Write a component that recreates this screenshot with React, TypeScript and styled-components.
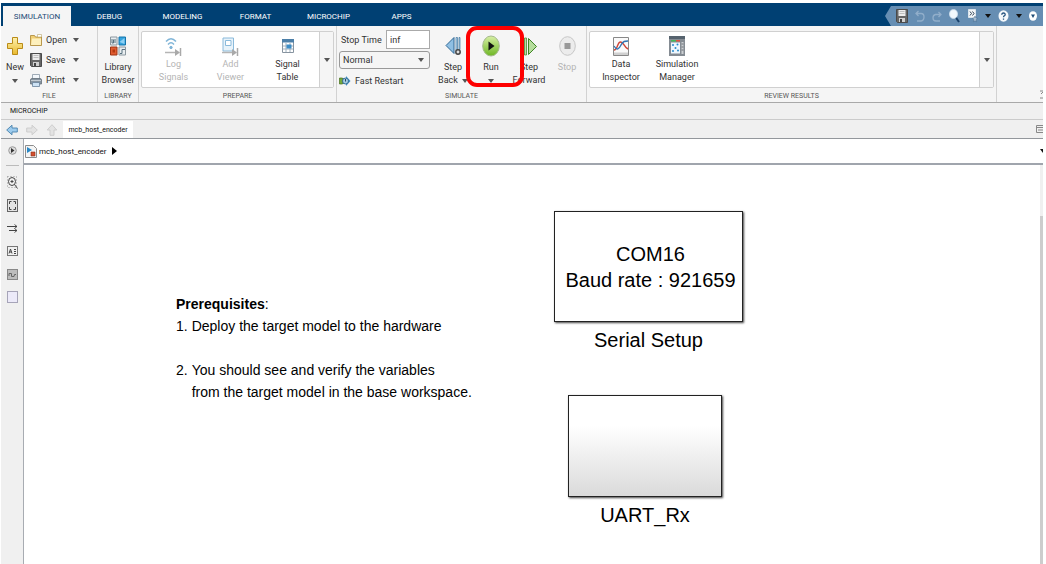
import React from 'react';
import styled, { createGlobalStyle } from 'styled-components';

const GlobalStyle = createGlobalStyle`
  * { box-sizing: border-box; }
  body { margin: 0; background: #fff; font-family: Roboto, "Open Sans", sans-serif; font-size: 9px; color: #333; }
  button, input, select { font: inherit; color: inherit; margin: 0; }
  button { border: 0; padding: 0; background: none; }
  svg { display: block; flex: none; }
`;

const Window = styled.div`
  min-height: 100vh;
  display: flex;
  flex-direction: column;
  padding: 3px 3px 0 1px;
`;

const TabBar = styled.nav`
  display: flex;
  align-items: flex-end;
  height: 23px;
  padding-left: 2px;
  background: #004073;
`;

const Tab = styled.button<{ $active?: boolean }>`
  width: ${p => (p.$active ? 68 : 73)}px;
  height: 20px;
  margin-right: ${p => (p.$active ? 2 : 0)}px;
  font-size: 8px;
  color: ${p => (p.$active ? '#1c4a75' : '#fff')};
  background: ${p => (p.$active ? '#f5f5f5' : 'transparent')};
`;

const QuickAccess = styled.div`
  display: flex;
  align-items: center;
  justify-content: space-between;
  width: 158px;
  height: 20px;
  margin-left: auto;
  padding: 0 6px 0 11px;
  background: #668eb3;
  clip-path: polygon(0 50%, 6px 0, 100% 0, 100% 100%, 6px 100%);
`;

const Toolstrip = styled.div`
  display: flex;
  height: 77px;
  background: #f5f5f5;
  border-bottom: 1px solid #a9a9a9;
`;

const Section = styled.section<{ $width?: number }>`
  display: flex;
  flex-direction: column;
  flex: ${p => (p.$width ? `0 0 ${p.$width}px` : '1')};
  border-right: 1px solid #d2d2d2;
`;

const SectionBody = styled.div<{ $inset?: number }>`
  display: flex;
  height: 65px;
  padding: 4px 0 0 ${p => p.$inset ?? 0}px;
`;

const SectionTitle = styled.h2`
  margin: 0;
  font-size: 7px;
  line-height: 11px;
  font-weight: 400;
  text-align: center;
  color: #555;
`;

const Tool = styled.button<{ $width: number; $tight?: boolean }>`
  position: relative;
  display: flex;
  flex-direction: column;
  align-items: center;
  width: ${p => p.$width}px;
  height: ${p => (p.$tight ? 52 : 58)}px;
  padding-top: ${p => (p.$tight ? 4 : 5)}px;
  line-height: 13px;
  color: #333;
  &:disabled { color: #b4b4b4; }
`;

const ToolIcon = styled.span<{ $tight?: boolean }>`
  display: flex;
  align-items: center;
  justify-content: center;
  height: ${p => (p.$tight ? 20 : 22)}px;
  margin-bottom: ${p => (p.$tight ? 2 : 4)}px;
`;

const ToolLine = styled.span`
  display: flex;
  align-items: center;
  justify-content: center;
  gap: 4px;
  height: 13px;
  white-space: nowrap;
`;

const SmallTools = styled.div`
  display: flex;
  flex-direction: column;
  margin-left: 4px;
`;

const SmallTool = styled.button`
  display: flex;
  align-items: center;
  width: 49px;
  height: 20px;
  gap: 4px;
`;

const SmallLabel = styled.span`
  flex: 1;
  text-align: left;
  white-space: nowrap;
`;

const Gallery = styled.div`
  display: flex;
  flex: 1;
  height: 57px;
  margin: 1px 2px 0 2px;
  padding-left: 3px;
  background: #fff;
  border: 1px solid #d0d0d0;
  border-radius: 2px;
`;

const GalleryMore = styled.button`
  display: flex;
  align-items: center;
  justify-content: center;
  width: 14px;
  margin-left: auto;
  background: #f5f5f5;
  border-left: 1px solid #d0d0d0;
`;

const SimFields = styled.div`
  display: flex;
  flex-direction: column;
  gap: 2px;
  width: 91px;
  margin-right: 4px;
`;

const Field = styled.label`
  display: flex;
  align-items: center;
  justify-content: space-between;
  height: 19px;
  padding-left: 2px;
  white-space: nowrap;
`;

const TextInput = styled.input`
  width: 44px;
  height: 19px;
  padding: 0 3px;
  border: 1px solid #aaa;
  background: #fff;
`;

const SelectWrap = styled.div`
  position: relative;
  height: 18px;
`;

const ModeSelect = styled.select`
  appearance: none;
  display: block;
  width: 100%;
  height: 18px;
  padding: 0 3px;
  background: #f5f5f5;
  border: 1px solid #999;
  border-radius: 3px;
`;

const SelectArrow = styled.span`
  position: absolute;
  right: 6px;
  top: 7px;
  pointer-events: none;
`;

const Highlight = styled.span`
  position: absolute;
  left: -6px;
  top: -4px;
  width: 58px;
  height: 61px;
  border: 4px solid #fe0000;
  border-radius: 11px;
  pointer-events: none;
  z-index: 1;
`;

const StripEnd = styled.div`
  display: flex;
  align-items: flex-end;
  justify-content: flex-end;
  flex: 0 0 46px;
  padding-bottom: 3px;
`;

const AppRow = styled.div`
  height: 17px;
  padding-left: 9px;
  font-size: 7px;
  line-height: 17px;
  color: #111;
  background: #f0f0f0;
  border-bottom: 1px solid #cbcbcb;
`;

const NavRow = styled.div`
  display: flex;
  align-items: center;
  height: 19px;
  padding-left: 5px;
  gap: 8px;
  background: #f0f0f0;
  border-bottom: 1px solid #93979c;
`;

const NavButton = styled.button`
  padding-top: 2px;
`;

const ModelTab = styled.button`
  align-self: flex-end;
  width: 70px;
  height: 17px;
  margin-left: -3px;
  font-size: 7px;
  color: #111;
  background: #fff;
`;

const PushRight = styled.span`
  margin-left: auto;
`;

const Workspace = styled.div`
  display: flex;
  flex: 1;
`;

const Palette = styled.aside`
  display: flex;
  flex-direction: column;
  align-items: center;
  flex: 0 0 23px;
  background: #f0f0f0;
  border-right: 1px solid #a8acb2;
`;

const PaletteButton = styled.button`
  display: flex;
  align-items: center;
  justify-content: center;
  width: 22px;
  height: 23px;
`;

const PaletteRule = styled.hr`
  width: 13px;
  margin: 3px 0 5px;
  border: 0;
  border-top: 1px solid #bbb;
`;

const Editor = styled.main`
  display: flex;
  flex-direction: column;
  flex: 1;
`;

const Breadcrumb = styled.div`
  display: flex;
  align-items: center;
  height: 26px;
  padding-left: 1px;
  gap: 2px;
  border-bottom: 2px solid #a0a5ad;
`;

const CrumbLink = styled.a`
  margin-right: 3px;
  font-size: 8px;
  color: #111;
  text-decoration: none;
`;

const CanvasArea = styled.div`
  display: flex;
  flex: 1;
`;

const Canvas = styled.div`
  position: relative;
  flex: 1;
  min-height: 380px;
  font-family: "Liberation Sans", Arial, sans-serif;
  color: #000;
  background: #fff;
`;

const ScrollBar = styled.div`
  flex: 0 0 3px;
  padding-top: 51px;
  background: #f0f0f0;
`;

const ScrollThumb = styled.div`
  height: 100%;
  background: #cdcdcd;
`;

const Annotation = styled.div`
  position: absolute;
  left: 152px;
  top: 128px;
  font-size: 14px;
  line-height: 22px;
  white-space: nowrap;
  p { margin: 0; }
`;

const Step = styled.p<{ $gap?: boolean }>`
  && { margin-top: ${p => (p.$gap ? 22 : 0)}px; }
  display: flex;
  gap: 4px;
`;

const Node = styled.div<{ $x: number; $y: number; $width: number }>`
  position: absolute;
  left: ${p => p.$x}px;
  top: ${p => p.$y}px;
  width: ${p => p.$width}px;
  font-size: 20px;
  line-height: 26px;
  text-align: center;
  white-space: nowrap;
`;

const NodeBox = styled.div<{ $height: number; $shaded?: boolean }>`
  display: flex;
  flex-direction: column;
  justify-content: center;
  height: ${p => p.$height}px;
  margin-bottom: 5px;
  padding-left: 4px;
  border: 1px solid #222;
  background: ${p => (p.$shaded ? 'linear-gradient(#fff 30%, #dadada)' : '#fff')};
  box-shadow: 1px 1px 2px #444;
`;

const Caret = ({ size = 6, color = '#555' }: { size?: number; color?: string }) => (
  <svg width={size} height={size / 2 + 1} viewBox="0 0 6 4"><path d="M0 0h6L3 4z" fill={color} /></svg>
);

const PlusIcon = () => (
  <svg width="18" height="20" viewBox="0 0 18 20">
    <defs><linearGradient id="gold" x2="0" y2="1"><stop stopColor="#fff3b0" /><stop offset="1" stopColor="#e9b92d" /></linearGradient></defs>
    <path d="M6.500 1.500h5v6h5v5h-5v6h-5v-6h-5v-5h5z" fill="url(#gold)" stroke="#b98b18" strokeLinejoin="round" />
  </svg>
);

const FolderIcon = () => (
  <svg width="12" height="12" viewBox="0 0 12 12">
    <path d="M.5 1.500h4l1 1.500h6v8.500H.5z" fill="#f0cf74" stroke="#a98534" strokeWidth=".8" />
    <path d="M2 4.500h9v6.500H1z" fill="#fdf0bd" />
    <path d="M7.500.5h4v2.500h-4z" fill="#fff" stroke="#b9a56a" strokeWidth=".6" />
  </svg>
);

const DiskIcon = () => (
  <svg width="12" height="14" viewBox="0 0 12 14">
    <path d="M.5.5h11v13h-10l-1-1z" fill="#666" stroke="#4a4a4a" />
    <path d="M2.500 1h7v6h-7z" fill="#ececec" />
    <path d="M3.500 2.500h5M3.500 4.500h5" stroke="#aaa" strokeWidth=".7" />
    <path d="M3 9h6v4H3z" fill="#cfcfcf" /><path d="M4 10h2v3H4z" fill="#444" />
  </svg>
);

const PrinterIcon = () => (
  <svg width="12" height="13" viewBox="0 0 12 13">
    <path d="M2.500.5h7V5h-7z" fill="#f4f8fc" stroke="#8a98a6" strokeWidth=".8" />
    <path d="M.5 6q0-1.500 1.500-1.500h8q1.500 0 1.500 1.500v4H.5z" fill="#8794a0" stroke="#66717b" strokeWidth=".8" />
    <path d="M1 6.500h10" stroke="#c4ccd3" />
    <path d="M2.500 8.500h7v4h-7z" fill="#cde2f4" stroke="#68829b" strokeWidth=".8" />
  </svg>
);

const LibraryIcon = () => (
  <svg width="16" height="20" viewBox="0 0 16 20">
    <path d="M.5 1h6.500v8H.5z" fill="#e8edf0" stroke="#8b979f" />
    <path d="M2 3v4h1.500V3.500M5 7V3" fill="none" stroke="#56707f" />
    <path d="M9 1h6.500v8H9z" fill="#35a4df" stroke="#1474ab" /><path d="M9.500 6l5-4v6z" fill="#8ed0f3" />
    <path d="M.5 11h6.500v8H.5z" fill="#e05b30" stroke="#9e3514" /><path d="M2.500 13.500h2.500v3H2.500z" fill="#b3380f" />
    <path d="M9 11h6.500v8H9z" fill="#e8edf0" stroke="#8b979f" />
    <path d="M10 17.500h2v-4h3" fill="none" stroke="#56707f" />
  </svg>
);

const LogIcon = () => (
  <svg width="17" height="19" viewBox="0 0 17 19" fill="none" stroke="#80b5d8">
    <path d="M1 4.500q5-5.500 10 0" strokeWidth="1.500" /><path d="M3 7.500q3-3.500 6 0" strokeWidth="1.500" />
    <circle cx="6" cy="10.500" r="1.200" fill="#80b5d8" />
    <path d="M0 15.500h12" stroke="#b5b5b5" strokeWidth="1.500" /><path d="M10 12l5 3.500-5 3.500z" fill="#a9a9a9" stroke="none" />
    <path d="M15.500 11v8" stroke="#a9a9a9" strokeWidth="1.500" />
  </svg>
);

const ViewerIcon = () => (
  <svg width="17" height="19" viewBox="0 0 17 19" fill="none">
    <path d="M1 1h10.500v13H1z" fill="#e8f3fa" stroke="#8abadb" /><path d="M3.500 3.500h5.500v5H3.500z" fill="#fff" stroke="#8abadb" />
    <path d="M0 15.500h12" stroke="#b5b5b5" strokeWidth="1.500" /><path d="M10 12l5 3.500-5 3.500z" fill="#a9a9a9" />
    <path d="M15.500 11v8" stroke="#a9a9a9" strokeWidth="1.500" />
  </svg>
);

const TableIcon = () => (
  <svg width="12" height="14" viewBox="0 0 12 14">
    <path d="M.5.5h11v13H.5z" fill="#fff" stroke="#8794a0" /><path d="M0 0h12v3.500H0z" fill="#4c7fa8" />
    <path d="M1 7h10M1 10h10M4 4v9M8 4v9" stroke="#9fb0be" /><path d="M4.500 5.500h5v4h-5z" fill="#3c8dc7" />
  </svg>
);

const FastIcon = () => (
  <svg width="12" height="12" viewBox="0 0 12 12">
    <path d="M.5 3v6h3V3z" fill="#74aa3b" stroke="#456f1c" strokeWidth=".7" /><path d="M7 1l4.500 5L7 11z" fill="#3d91c7" />
    <path d="M4 3h4v6H4z" fill="#3d91c7" /><circle cx="6.500" cy="6" r="3" fill="#a3cbe2" stroke="#245d85" strokeWidth=".8" />
    <path d="M6.500 4v2.500" stroke="#24475e" />
  </svg>
);

const StepBackIcon = () => (
  <svg width="16" height="20" viewBox="0 0 16 20">
    <path d="M9 1.500v16L1 9.500z" fill="#8fbfe3" stroke="#2f6795" /><path d="M11 1.500h1.500v13H11zM14 1.500h1v12h-1z" fill="#b9d8ee" stroke="#41769f" strokeWidth=".7" />
    <circle cx="13" cy="16" r="2.200" fill="#ddd" stroke="#444" strokeWidth="1.500" />
  </svg>
);

const RunIcon = () => (
  <svg width="18" height="22" viewBox="0 0 18 22">
    <defs><linearGradient id="lime" x2="0" y2="1"><stop stopColor="#d8f0a6" /><stop offset="1" stopColor="#6db623" /></linearGradient></defs>
    <ellipse cx="9" cy="11" rx="8.300" ry="10" fill="url(#lime)" stroke="#a4b98c" /><path d="M6.500 6.500l6 4.500-6 4.500z" fill="#111" />
  </svg>
);

const StepForwardIcon = () => (
  <svg width="18" height="19" viewBox="0 0 18 19">
    <path d="M1 1h2v17H1zM4.500 1h2v17h-2z" fill="#b9dca4" stroke="#4d8a33" strokeWidth=".8" /><path d="M8.500 1.500v16l8-8z" fill="#b5dd9c" stroke="#3f8526" />
  </svg>
);

const StopIcon = () => (
  <svg width="17" height="20" viewBox="0 0 17 20">
    <ellipse cx="8.500" cy="10" rx="7.800" ry="9.300" fill="#ececec" stroke="#c6c6c6" /><path d="M5.500 7h6v6h-6z" fill="#999" />
  </svg>
);

const InspectorIcon = () => (
  <svg width="16" height="19" viewBox="0 0 16 19" fill="none">
    <path d="M.5.5h15v18H.5z" fill="#fafafa" stroke="#888" /><path d="M1 15.500h14v2.500H1z" fill="#d0d0d0" />
    <path d="M1 13c4 0 3-8 6.500-8s3.500 5 7.500 7" stroke="#cf4436" strokeWidth="1.400" /><path d="M1 9c3 5 5 3 7-1s4-4 7-4" stroke="#3176b4" strokeWidth="1.400" />
  </svg>
);

const ManagerIcon = () => (
  <svg width="16" height="20" viewBox="0 0 16 20">
    <path d="M0 0h16v20H0z" fill="#858c93" /><path d="M0 0h16v3H0z" fill="#56636e" />
    <path d="M2 4h6v1.500H2z" fill="#45ba58" /><path d="M7 4h4v1.500H7z" fill="#e35140" />
    <path d="M2 6.500h9v11H2z" fill="#eef7fd" />
    <g fill="#2689cb"><circle cx="4" cy="9" r="1" /><circle cx="8.500" cy="8.500" r="1" /><circle cx="6.500" cy="12" r="1" /><circle cx="4" cy="15" r="1" /><circle cx="9" cy="14.500" r="1" /></g>
    <path d="M12.500 6h2v12h-2z" fill="#ccd0d3" /><path d="M12.500 8h2M12.500 11h2M12.500 14h2" stroke="#6c7278" />
  </svg>
);

const UndoIcon = ({ flip }: { flip?: boolean }) => (
  <svg width="10" height="12" viewBox="0 0 10 12" fill="none" stroke="#91aeca" strokeWidth="1.300">
    {flip ? <path d="M9 4.500H3.500Q1 5 1 8t3 3h4M6.500 2L9 4.500 6.500 7" /> : <path d="M3.500 1L1 3.500 3.500 6M1 3.500h5Q9 3.500 9 7t-3 4H2" />}
  </svg>
);

const SearchIcon = () => (
  <svg width="11" height="14" viewBox="0 0 11 14">
    <path d="M6.500 8L10 13" stroke="#173f69" strokeWidth="2" /><ellipse cx="4.500" cy="5" rx="3.800" ry="4.300" fill="#f2f8fd" stroke="#dbe8f3" />
  </svg>
);

const FavouriteIcon = () => (
  <svg width="10" height="14" viewBox="0 0 10 14" fill="none">
    <path d="M.5.5h7v8h-7z" fill="#f3f6f9" stroke="#dce4eb" /><path d="M2 2.500l1.500 2L2 6.500M4.500 2.500l1.500 2-1.500 2" stroke="#2c3f52" />
    <path d="M7 7l.9 2 1.600.2-1.200 1.400.3 2.200L7 11.800l-1.600 1 .3-2.200-1.200-1.400 1.600-.2z" fill="#a9bfd4" stroke="#45688a" strokeWidth=".5" />
  </svg>
);

const HelpIcon = () => (
  <svg width="11" height="12" viewBox="0 0 11 12" fill="none">
    <ellipse cx="5.500" cy="6" rx="5" ry="5.700" fill="#f5f9fc" /><path d="M3.800 4.700q0-1.700 1.700-1.700t1.700 1.500q0 1-1 1.400-.7.300-.7 1.400M5.500 8.400v1.300" stroke="#285681" strokeWidth="1.300" />
  </svg>
);

const DownCircleIcon = () => (
  <svg width="8" height="10" viewBox="0 0 8 10"><ellipse cx="4" cy="5" rx="4" ry="4.800" fill="#fff" /><path d="M2 3.500h4L4 7z" fill="#1c4a75" /></svg>
);

const ArrowIcon = ({ turn = 0, muted }: { turn?: number; muted?: boolean }) => (
  <svg width="12" height="12" viewBox="0 0 12 12">
    <path transform={`rotate(${turn} 6 6)`} d="M.7 6L6 1.200V4h5.300v4H6v2.800z" fill={muted ? '#e3e3e3' : '#9ccbed'} stroke={muted ? '#cbcbcb' : '#4782ad'} strokeWidth=".9" />
  </svg>
);

const ModelIcon = () => (
  <svg width="12" height="13" viewBox="0 0 12 13">
    <path d="M.5.5h8l3 3v9H.5z" fill="#f5f5f5" stroke="#8d8d8d" /><path d="M2 2l5 3-5 3z" fill="#2a88c6" />
    <path d="M6 7h4v4H6z" fill="#d4502f" stroke="#8b2e16" strokeWidth=".6" />
  </svg>
);

const paletteIcons: { name: string; icon: React.ReactNode }[] = [
  { name: 'Zoom', icon: <><rect x=".5" y=".5" width="9" height="11" stroke="#999" strokeDasharray="1 2" /><ellipse cx="5" cy="5.500" rx="3.500" ry="4" /><path d="M3.500 5.500h3M5 4v3M7.500 8.500L10.500 12.500" /></> },
  { name: 'Fit to view', icon: <><rect x=".5" y=".5" width="10" height="12" fill="#e4e4e4" stroke="#666" /><path d="M2.500 5V2.500h2M6.500 2.500h2V5M2.500 8v2.500h2M6.500 10.500h2V8" /></> },
  { name: 'Signals', icon: <><path d="M0 4.500h10M2 8.500h8" /><path d="M7.500 2.500l2.500 2-2.500 2M7.500 6.500l2.500 2-2.500 2" strokeWidth=".9" /></> },
  { name: 'Annotation', icon: <><rect x=".5" y="1.500" width="10" height="9" fill="#f0f0f0" stroke="#777" /><path d="M2 8.500l1.500-4.500L5 8.500M2.500 7h2M7 4.500h2M7 6.500h2M7 8.500h2" /></> },
  { name: 'Image', icon: <><rect x=".5" y="1.500" width="10" height="10" fill="#bdbdbd" stroke="#888" /><path d="M2 8V5.500h2.500v3H7q0-3 2-2" stroke="#666" /></> },
  { name: 'Area', icon: <rect x=".5" y=".5" width="10" height="11" fill="#eceaf9" stroke="#a6a4b8" /> },
];

export default function App() {
  return (
    <Window>
      <GlobalStyle />
      <TabBar>
        <Tab $active>SIMULATION</Tab>
        {['DEBUG', 'MODELING', 'FORMAT', 'MICROCHIP', 'APPS'].map(name => <Tab key={name}>{name}</Tab>)}
        <QuickAccess>
          <button aria-label="Save"><DiskIcon /></button>
          <button aria-label="Undo"><UndoIcon /></button>
          <button aria-label="Redo"><UndoIcon flip /></button>
          <button aria-label="Search"><SearchIcon /></button>
          <button aria-label="Favorites"><FavouriteIcon /></button>
          <button aria-label="More favorites"><Caret size={6} color="#111" /></button>
          <button aria-label="Help"><HelpIcon /></button>
          <button aria-label="More help"><Caret size={6} color="#111" /></button>
          <button aria-label="Minimize"><DownCircleIcon /></button>
        </QuickAccess>
      </TabBar>

      <Toolstrip>
        <Section $width={97}>
          <SectionBody $inset={3}>
            <Tool $width={22}>
              <ToolIcon><PlusIcon /></ToolIcon>
              <ToolLine>New</ToolLine>
              <ToolLine><Caret /></ToolLine>
            </Tool>
            <SmallTools>
              <SmallTool><FolderIcon /><SmallLabel>Open</SmallLabel><Caret /></SmallTool>
              <SmallTool><DiskIcon /><SmallLabel>Save</SmallLabel><Caret /></SmallTool>
              <SmallTool><PrinterIcon /><SmallLabel>Print</SmallLabel><Caret /></SmallTool>
            </SmallTools>
          </SectionBody>
          <SectionTitle>FILE</SectionTitle>
        </Section>

        <Section $width={41}>
          <SectionBody>
            <Tool $width={40}>
              <ToolIcon><LibraryIcon /></ToolIcon>
              <ToolLine>Library</ToolLine>
              <ToolLine>Browser</ToolLine>
            </Tool>
          </SectionBody>
          <SectionTitle>LIBRARY</SectionTitle>
        </Section>

        <Section $width={198}>
          <SectionBody>
            <Gallery>
              <Tool $width={57} $tight disabled><ToolIcon $tight><LogIcon /></ToolIcon><ToolLine>Log</ToolLine><ToolLine>Signals</ToolLine></Tool>
              <Tool $width={57} $tight disabled><ToolIcon $tight><ViewerIcon /></ToolIcon><ToolLine>Add</ToolLine><ToolLine>Viewer</ToolLine></Tool>
              <Tool $width={57} $tight><ToolIcon $tight><TableIcon /></ToolIcon><ToolLine>Signal</ToolLine><ToolLine>Table</ToolLine></Tool>
              <GalleryMore aria-label="More prepare tools"><Caret /></GalleryMore>
            </Gallery>
          </SectionBody>
          <SectionTitle>PREPARE</SectionTitle>
        </Section>

        <Section $width={250}>
          <SectionBody $inset={2}>
            <SimFields>
              <Field>Stop Time<TextInput defaultValue="inf" /></Field>
              <SelectWrap>
                <ModeSelect aria-label="Simulation mode" defaultValue="Normal"><option>Normal</option><option>Accelerator</option></ModeSelect>
                <SelectArrow><Caret /></SelectArrow>
              </SelectWrap>
              <SmallTool><FastIcon /><SmallLabel>Fast Restart</SmallLabel></SmallTool>
            </SimFields>
            <Tool $width={38}>
              <ToolIcon><StepBackIcon /></ToolIcon><ToolLine>Step</ToolLine><ToolLine>Back <Caret /></ToolLine>
            </Tool>
            <Tool $width={38}>
              <ToolIcon><RunIcon /></ToolIcon><ToolLine>Run</ToolLine><ToolLine><Caret /></ToolLine>
              <Highlight />
            </Tool>
            <Tool $width={38}>
              <ToolIcon><StepForwardIcon /></ToolIcon><ToolLine>Step</ToolLine><ToolLine>Forward</ToolLine>
            </Tool>
            <Tool $width={38} disabled><ToolIcon><StopIcon /></ToolIcon><ToolLine>Stop</ToolLine></Tool>
          </SectionBody>
          <SectionTitle>SIMULATE</SectionTitle>
        </Section>

        <Section>
          <SectionBody>
            <Gallery>
              <Tool $width={56} $tight><ToolIcon $tight><InspectorIcon /></ToolIcon><ToolLine>Data</ToolLine><ToolLine>Inspector</ToolLine></Tool>
              <Tool $width={56} $tight><ToolIcon $tight><ManagerIcon /></ToolIcon><ToolLine>Simulation</ToolLine><ToolLine>Manager</ToolLine></Tool>
              <GalleryMore aria-label="More result tools"><Caret /></GalleryMore>
            </Gallery>
          </SectionBody>
          <SectionTitle>REVIEW RESULTS</SectionTitle>
        </Section>
        <StripEnd>
          <svg width="3" height="9" viewBox="0 0 3 9"><path d="M0 1h3M1 4l2-2M0 8h3" stroke="#888" fill="none" /></svg>
        </StripEnd>
      </Toolstrip>

      <AppRow>MICROCHIP</AppRow>
      <NavRow>
        <NavButton aria-label="Back"><ArrowIcon /></NavButton>
        <NavButton aria-label="Forward"><ArrowIcon turn={180} muted /></NavButton>
        <NavButton aria-label="Up"><ArrowIcon turn={90} muted /></NavButton>
        <ModelTab>mcb_host_encoder</ModelTab>
        <PushRight><svg width="7" height="8" viewBox="0 0 7 8"><path d="M7 .5H.5v7H7M1 2.500h6M2 5h5" stroke="#888" fill="none" /></svg></PushRight>
      </NavRow>

      <Workspace>
        <Palette>
          <PaletteButton aria-label="Hide browser">
            <svg width="9" height="9" viewBox="0 0 9 9"><circle cx="4.500" cy="4.500" r="3.800" fill="#ddd" stroke="#999" /><path d="M3 2l3.500 2.500L3 7z" fill="#333" /></svg>
          </PaletteButton>
          <PaletteRule />
          {paletteIcons.map(({ name, icon }) => (
            <PaletteButton key={name} aria-label={name}>
              <svg width="11" height="13" viewBox="0 0 11 13" fill="none" stroke="#444">{icon}</svg>
            </PaletteButton>
          ))}
        </Palette>
        <Editor>
          <Breadcrumb>
            <ModelIcon />
            <CrumbLink href="#model">mcb_host_encoder</CrumbLink>
            <svg width="5" height="8" viewBox="0 0 5 8"><path d="M0 0l5 4-5 4z" fill="#000" /></svg>
            <PushRight><svg width="3" height="4" viewBox="0 0 3 4"><path d="M0 0h3v4z" fill="#111" /></svg></PushRight>
          </Breadcrumb>
          <CanvasArea>
            <Canvas>
              <Annotation>
                <p><b>Prerequisites</b>:</p>
                <Step><span>1.</span><span>Deploy the target model to the hardware</span></Step>
                <Step $gap><span>2.</span><span>You should see and verify the variables<br />from the target model in the base workspace.</span></Step>
              </Annotation>
              <Node $x={530} $y={46} $width={189}>
                <NodeBox $height={111}><span>COM16</span><span>Baud rate : 921659</span></NodeBox>
                Serial Setup
              </Node>
              <Node $x={544} $y={230} $width={154}>
                <NodeBox $height={102} $shaded />
                UART_Rx
              </Node>
            </Canvas>
            <ScrollBar><ScrollThumb /></ScrollBar>
          </CanvasArea>
        </Editor>
      </Workspace>
    </Window>
  );
}
